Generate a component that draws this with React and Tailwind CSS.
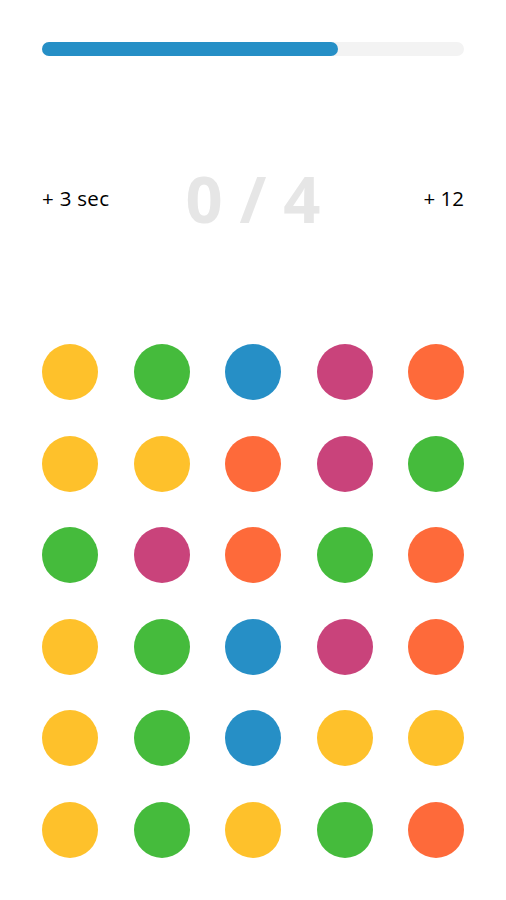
import React from "react";

const Y = "bg-[#fec12b]";
const G = "bg-[#45bb3c]";
const B = "bg-[#268fc6]";
const M = "bg-[#c9437b]";
const O = "bg-[#fe6a3a]";

const rows = [
  [Y, G, B, M, O],
  [Y, Y, O, M, G],
  [G, M, O, G, O],
  [Y, G, B, M, O],
  [Y, G, B, Y, Y],
  [Y, G, Y, G, O],
];

export default function App() {
  return (
    <div
      className="w-full min-h-[900px] bg-white px-[42px] pt-[42px]"
      style={{ fontFamily: '"Open Sans", "Noto Sans", sans-serif' }}
    >
      <div className="h-[14px] w-full rounded-full bg-[#f3f3f3]">
        <div className="h-[14px] w-[296px] rounded-full bg-[#268fc6]" />
      </div>

      <div className="mt-[102px] grid h-[80px] grid-cols-[1fr_auto_1fr] items-center">
        <span className="justify-self-start text-[20.5px] leading-none tracking-[0.3px] text-black">+ 3 sec</span>
        <span className="text-[65px] font-bold leading-none text-[#e6e6e6]">0 / 4</span>
        <span className="justify-self-end text-[20.5px] leading-none text-black">+ 12</span>
      </div>

      <div className="mt-[106px] grid grid-cols-[repeat(5,56px)] justify-between gap-y-[35.6px]">
        {rows.flat().map((c, i) => (
          <div key={i} className={`h-[56px] w-[56px] rounded-full ${c}`} />
        ))}
      </div>
    </div>
  );
}
